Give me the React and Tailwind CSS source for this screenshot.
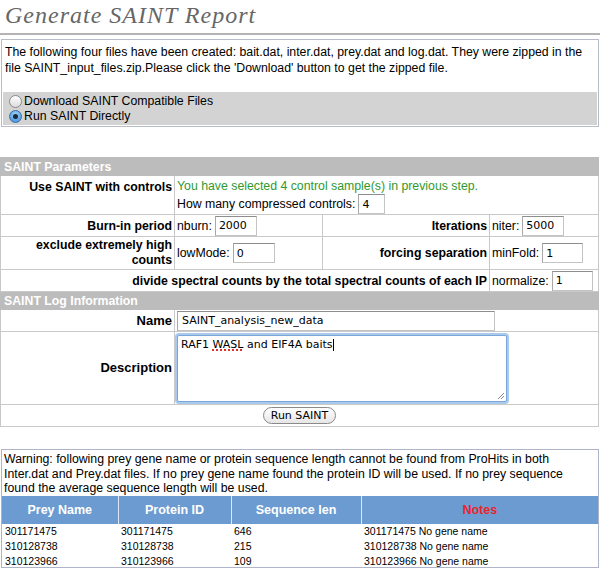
import React from "react";

const inputCls =
  "h-[20px] border border-[#c4c4c4] border-t-[#8e8e8e] border-l-[#a8a8a8] bg-white px-[3px] text-[11px] font-['DejaVu_Sans',sans-serif] leading-[18px] text-black align-middle";

function Radio({ checked }) {
  if (checked) {
    return (
      <span className="inline-flex items-center justify-center w-[13px] h-[13px] rounded-full bg-[radial-gradient(circle_at_50%_30%,#9cd0f5,#3b8ad8)] border border-[#3a6ea8] mr-[2px] align-middle">
        <span className="w-[5px] h-[5px] rounded-full bg-[#1c2a3a]" />
      </span>
    );
  }
  return (
    <span className="inline-block w-[13px] h-[13px] rounded-full bg-[linear-gradient(#ffffff,#dcdcdc)] border border-[#8a8a8a] mr-[2px] align-middle" />
  );
}

export default function App() {
  const td = "border border-[#c9c9c9] px-[2px]";
  return (
    <div className="w-[600px] h-[571px] bg-white text-black font-['Liberation_Sans',Arial,sans-serif] text-[12.3px] leading-[16px] overflow-hidden">
      <div className="h-[33px] pl-[5px] pt-[2px] font-['Liberation_Serif',serif] italic text-[24px] leading-[26px] tracking-[1px] text-[#666]">
        Generate SAINT Report
      </div>
      <div className="h-[2px] bg-[#b4b4b4]" />
      <div className="mt-[4px] mx-[1px] border border-[#b8bbc8] p-[1px]">
        <div className="px-[2px] pt-[3px] h-[51px]">
          The following four files have been created: bait.dat, inter.dat, prey.dat and log.dat. They were zipped in the file SAINT_input_files.zip.Please click the 'Download' button to get the zipped file.
        </div>
        <div className="bg-[#d3d3d3] h-[33px] px-[6px] pt-[2px] leading-[15px]">
          <div className="flex items-center">
            <Radio />
            <span>Download SAINT Compatible Files</span>
          </div>
          <div className="flex items-center">
            <Radio checked />
            <span>Run SAINT Directly</span>
          </div>
        </div>
      </div>

      <table className="mt-[30px] w-[598px] border-collapse table-fixed">
        <colgroup>
          <col className="w-[174px]" />
          <col className="w-[148px]" />
          <col className="w-[167px]" />
          <col className="w-[109px]" />
        </colgroup>
        <tbody>
          <tr className="h-[18px]">
            <td colSpan={4} className="bg-[#bcbcbc] text-white font-bold px-[3px] border border-[#bcbcbc]">
              SAINT Parameters
            </td>
          </tr>
          <tr className="h-[38px]">
            <td className={`${td} text-right font-bold align-top pt-[3px]`}>Use SAINT with controls</td>
            <td colSpan={3} className={`${td} align-top pt-[2px]`}>
              <div className="text-[#2f9a2f]">You have selected 4 control sample(s) in previous step.</div>
              <div className="flex items-center gap-[3px]">
                <span>How many compressed controls:</span>
                <input readOnly value="4" className={`${inputCls} w-[27px]`} />
              </div>
            </td>
          </tr>
          <tr className="h-[22px]">
            <td className={`${td} text-right font-bold`}>Burn-in period</td>
            <td className={td}>
              <div className="flex items-center gap-[3px]">
                <span>nburn:</span>
                <input readOnly value="2000" className={`${inputCls} w-[42px]`} />
              </div>
            </td>
            <td className={`${td} text-right font-bold`}>Iterations</td>
            <td className={td}>
              <div className="flex items-center gap-[3px]">
                <span>niter:</span>
                <input readOnly value="5000" className={`${inputCls} w-[42px]`} />
              </div>
            </td>
          </tr>
          <tr className="h-[33px]">
            <td className={`${td} text-right font-bold leading-[15px]`}>exclude extremely high counts</td>
            <td className={td}>
              <div className="flex items-center gap-[3px]">
                <span>lowMode:</span>
                <input readOnly value="0" className={`${inputCls} w-[42px]`} />
              </div>
            </td>
            <td className={`${td} text-right font-bold`}>forcing separation</td>
            <td className={td}>
              <div className="flex items-center gap-[3px]">
                <span>minFold:</span>
                <input readOnly value="1" className={`${inputCls} w-[41px]`} />
              </div>
            </td>
          </tr>
          <tr className="h-[22px]">
            <td colSpan={3} className={`${td} text-right font-bold`}>
              divide spectral counts by the total spectral counts of each IP
            </td>
            <td className={td}>
              <div className="flex items-center gap-[3px]">
                <span>normalize:</span>
                <input readOnly value="1" className={`${inputCls} w-[41px]`} />
              </div>
            </td>
          </tr>
          <tr className="h-[18px]">
            <td colSpan={4} className="bg-[#bcbcbc] text-white font-bold px-[3px] border border-[#bcbcbc]">
              SAINT Log Information
            </td>
          </tr>
          <tr className="h-[22px]">
            <td className={`${td} text-right font-bold text-[13px]`}>Name</td>
            <td colSpan={3} className={`${td} px-[1px]`}>
              <input readOnly value="SAINT_analysis_new_data" className={`${inputCls} w-[318px] px-[4px]`} />
            </td>
          </tr>
          <tr className="h-[73px]">
            <td className={`${td} text-right font-bold text-[13px]`}>Description</td>
            <td colSpan={3} className={`${td} px-[1px] py-[2px]`}>
              <div className="relative w-[330px] h-[67px] border border-[#7aa7d8] rounded-[2px] shadow-[0_0_0_2px_#a9c9ee] bg-white px-[3px] pt-[2px] text-[11px] leading-[14px] font-['DejaVu_Sans',sans-serif]">
                RAF1{" "}
                <span className="underline decoration-dotted decoration-[#e03030] decoration-2 underline-offset-2">WASL</span>{" "}
                and EIF4A baits<span className="inline-block w-px h-[12px] bg-black align-middle" />
                <svg className="absolute right-[1px] bottom-[1px]" width="9" height="9" viewBox="0 0 9 9">
                  <path d="M8 2 L2 8 M8 5 L5 8" stroke="#888" strokeWidth="1" />
                </svg>
              </div>
            </td>
          </tr>
          <tr className="h-[22px]">
            <td colSpan={4} className={`${td} text-center`}>
              <button className="h-[17px] px-[7px] rounded-full border border-[#8a8a8a] bg-[linear-gradient(#ffffff,#e6e6e6)] text-[11px] leading-[15px] font-['DejaVu_Sans',sans-serif] text-black">
                Run SAINT
              </button>
            </td>
          </tr>
        </tbody>
      </table>

      <div className="mt-[22px] mx-[1px] border border-[#b0b4c8] h-[119px]">
        <div className="px-[2px] pt-[2px] leading-[14.5px]">
          Warning: following prey gene name or protein sequence length cannot be found from ProHits in both Inter.dat and Prey.dat files. If no prey gene name found the protein ID will be used. If no prey sequence found the average sequence length will be used.
        </div>
        <table className="w-full border-collapse table-fixed">
          <colgroup>
            <col className="w-[116px]" />
            <col className="w-[113px]" />
            <col className="w-[130px]" />
            <col />
          </colgroup>
          <thead>
            <tr className="h-[28px] bg-[#6b9bd0] text-white font-bold text-[12.5px]">
              <th className="border-r border-[#dfe8f4]">Prey Name</th>
              <th className="border-r border-[#dfe8f4]">Protein ID</th>
              <th className="border-r border-[#dfe8f4]">Sequence len</th>
              <th className="text-[#e8262a]">Notes</th>
            </tr>
          </thead>
          <tbody className="text-[10.5px] leading-[15px]">
            {[
              ["301171475", "646"],
              ["310128738", "215"],
              ["310123966", "109"],
            ].map(([id, len]) => (
              <tr key={id} className="h-[15px]">
                <td className="pl-[3px]">{id}</td>
                <td className="pl-[3px]">{id}</td>
                <td className="pl-[3px]">{len}</td>
                <td className="pl-[3px]">{id} No gene name</td>
              </tr>
            ))}
          </tbody>
        </table>
      </div>
    </div>
  );
}
